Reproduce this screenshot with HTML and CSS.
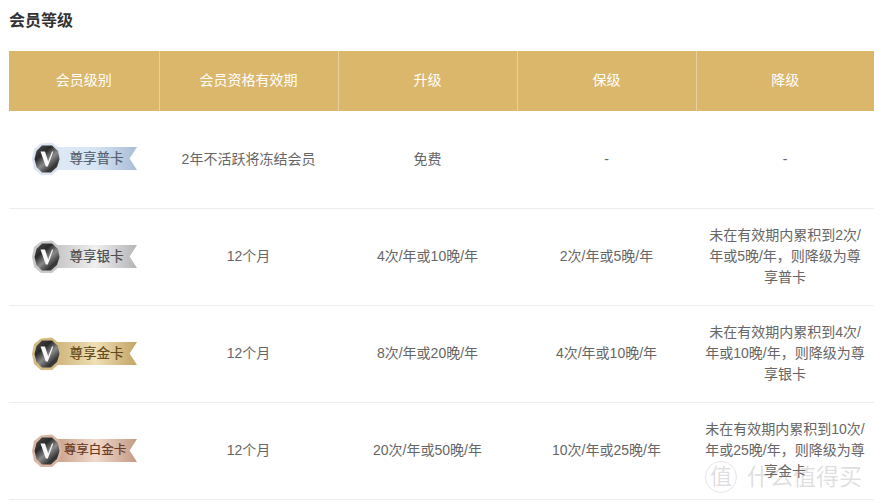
FILE: index.html
```html
<!DOCTYPE html>
<html lang="zh">
<head>
<meta charset="utf-8">
<title>会员等级</title>
<link rel="stylesheet" href="styles.css">
</head>
<body>
<svg class="defs" width="0" height="0" aria-hidden="true">
  <defs>
    <linearGradient id="coin" x1="0.1" y1="0" x2="0.9" y2="1">
      <stop offset="0" stop-color="#4a4a4a"/><stop offset=".3" stop-color="#2a2a2a"/><stop offset=".55" stop-color="#8a8a8a"/><stop offset=".8" stop-color="#333"/><stop offset="1" stop-color="#555"/>
    </linearGradient>
    <linearGradient id="r-blue" x1="0" x2="1"><stop offset="0" stop-color="#dfeaf7"/><stop offset=".5" stop-color="#d6e4f5"/><stop offset="1" stop-color="#a9bdd8"/></linearGradient>
    <linearGradient id="r-silver" x1="0" x2="1"><stop offset="0" stop-color="#c4c4c6"/><stop offset=".5" stop-color="#efeff0"/><stop offset="1" stop-color="#b4b4b7"/></linearGradient>
    <linearGradient id="r-gold" x1="0" x2="1"><stop offset="0" stop-color="#cdb27a"/><stop offset=".5" stop-color="#efdfb4"/><stop offset="1" stop-color="#c3a465"/></linearGradient>
    <linearGradient id="r-plat" x1="0" x2="1"><stop offset="0" stop-color="#c99d86"/><stop offset=".5" stop-color="#f0d9cc"/><stop offset="1" stop-color="#c39a84"/></linearGradient>
    <symbol id="medal" viewBox="0 0 30 34">
      <polygon points="9,1.500 20,0.500 28,7 30,17 27,27 20,33 9,33 2,27 0,17 2,7" fill="currentColor"/>
      <polygon points="10,3.500 20,3.500 26,9 27.500,17 25,25 19,30.500 10,30.500 4.500,25 2.500,17 4.500,9" fill="url(#coin)"/>
      <path d="M8.500 9.500h4.500l3.200 10 3.800-10h1.300l-5.500 15h-2z" fill="#f8f8f8"/>
    </symbol>
  </defs>
</svg>
<main class="page">
  <h2 class="title">会员等级</h2>
  <table class="levels">
    <colgroup><col class="c1"><col class="c2"><col class="c2"><col class="c2"><col class="c5"></colgroup>
    <thead>
      <tr><th>会员级别</th><th>会员资格有效期</th><th>升级</th><th>保级</th><th>降级</th></tr>
    </thead>
    <tbody>
      <tr>
        <td><div class="badge blue"><span class="ribbon"><svg class="ribbon-bg" viewBox="0 0 90 24" preserveAspectRatio="none"><polygon points="0,0 90,0 82,12 90,24 0,24" fill="url(#r-blue)"/></svg><span class="ribbon-text">尊享普卡</span></span><svg class="medal"><use href="#medal"/></svg></div></td>
        <td>2年不活跃将冻结会员</td><td>免费</td><td>-</td><td>-</td>
      </tr>
      <tr>
        <td><div class="badge silver"><span class="ribbon"><svg class="ribbon-bg" viewBox="0 0 90 24" preserveAspectRatio="none"><polygon points="0,0 90,0 82,12 90,24 0,24" fill="url(#r-silver)"/></svg><span class="ribbon-text">尊享银卡</span></span><svg class="medal"><use href="#medal"/></svg></div></td>
        <td>12个月</td><td>4次/年或10晚/年</td><td>2次/年或5晚/年</td><td class="rule">未在有效期内累积到2次/年或5晚/年，则降级为尊享普卡</td>
      </tr>
      <tr>
        <td><div class="badge gold"><span class="ribbon"><svg class="ribbon-bg" viewBox="0 0 90 24" preserveAspectRatio="none"><polygon points="0,0 90,0 82,12 90,24 0,24" fill="url(#r-gold)"/></svg><span class="ribbon-text">尊享金卡</span></span><svg class="medal"><use href="#medal"/></svg></div></td>
        <td>12个月</td><td>8次/年或20晚/年</td><td>4次/年或10晚/年</td><td class="rule">未在有效期内累积到4次/年或10晚/年，则降级为尊享银卡</td>
      </tr>
      <tr>
        <td><div class="badge plat"><span class="ribbon"><svg class="ribbon-bg" viewBox="0 0 90 24" preserveAspectRatio="none"><polygon points="0,0 90,0 82,12 90,24 0,24" fill="url(#r-plat)"/></svg><span class="ribbon-text small">尊享白金卡</span></span><svg class="medal"><use href="#medal"/></svg></div></td>
        <td>12个月</td><td>20次/年或50晚/年</td><td>10次/年或25晚/年</td><td class="rule">未在有效期内累积到10次/年或25晚/年，则降级为尊享金卡</td>
      </tr>
    </tbody>
  </table>
</main>
<div class="watermark"><span class="wm-seal">值</span><span class="wm-name">什么值得买</span></div>
</body>
</html>
```

FILE: styles.css
```css
* { box-sizing: border-box; }
html, body { margin: 0; height: 503px; overflow: hidden; background: #fff; }
body { font-family: "Liberation Sans", "Noto Sans CJK SC", sans-serif; color: #666; position: relative; }
.defs { position: absolute; }
.page { padding: 12px 0 0 9px; }
.title { margin: 0 0 21px; font-size: 16px; line-height: 18px; font-weight: 700; color: #333; }
.levels { width: 865px; border-collapse: collapse; table-layout: fixed; font-size: 14px; }
.c1 { width: 150px; }
.c2 { width: 179px; }
.c5 { width: 178px; }
th { height: 60px; padding: 0 0 4px; background: #dbb76b; color: #fff; font-weight: 400; border-right: 1px solid #e8d09f; }
th:last-child { border-right: 0; }
td { height: 97px; padding: 0 10px; text-align: center; line-height: 21px; border-bottom: 1px solid #eee; color: #666; }
.rule { padding: 0 8px; word-break: break-all; }
.badge { position: relative; width: 105px; height: 34px; margin: 0 auto; text-align: left; }
.medal { position: absolute; left: 0; top: 0; width: 30px; height: 34px; }
.ribbon { position: absolute; left: 22px; top: 5px; width: 83px; height: 23px; display: flex; align-items: center; justify-content: center; }
.ribbon-bg { position: absolute; inset: 0; width: 100%; height: 100%; }
.ribbon-text { position: relative; font-size: 13.5px; line-height: 23px; white-space: nowrap; padding-left: 3px; -webkit-text-stroke: 0.2px currentColor; }
.ribbon-text.small { font-size: 12.5px; padding-left: 0; }
.blue { color: #dbe5f1; }
.blue .ribbon-text { color: #555f6e; }
.silver { color: #c9c9cb; }
.silver .ribbon-text { color: #4d4d4d; }
.gold { color: #d4bb84; }
.gold .ribbon-text { color: #634818; }
.plat { color: #d9b6a4; }
.plat .ribbon-text { color: #693a24; }
.watermark { position: absolute; left: 705px; top: 461px; display: flex; align-items: center; gap: 10px; color: rgba(130, 130, 130, .26); pointer-events: none; }
.wm-seal { width: 32px; height: 32px; border: 1px solid rgba(130, 130, 130, .2); border-radius: 50%; display: flex; align-items: center; justify-content: center; font-size: 22px; line-height: 1; }
.wm-name { font-size: 23px; line-height: 30px; letter-spacing: 0; white-space: nowrap; }
```
